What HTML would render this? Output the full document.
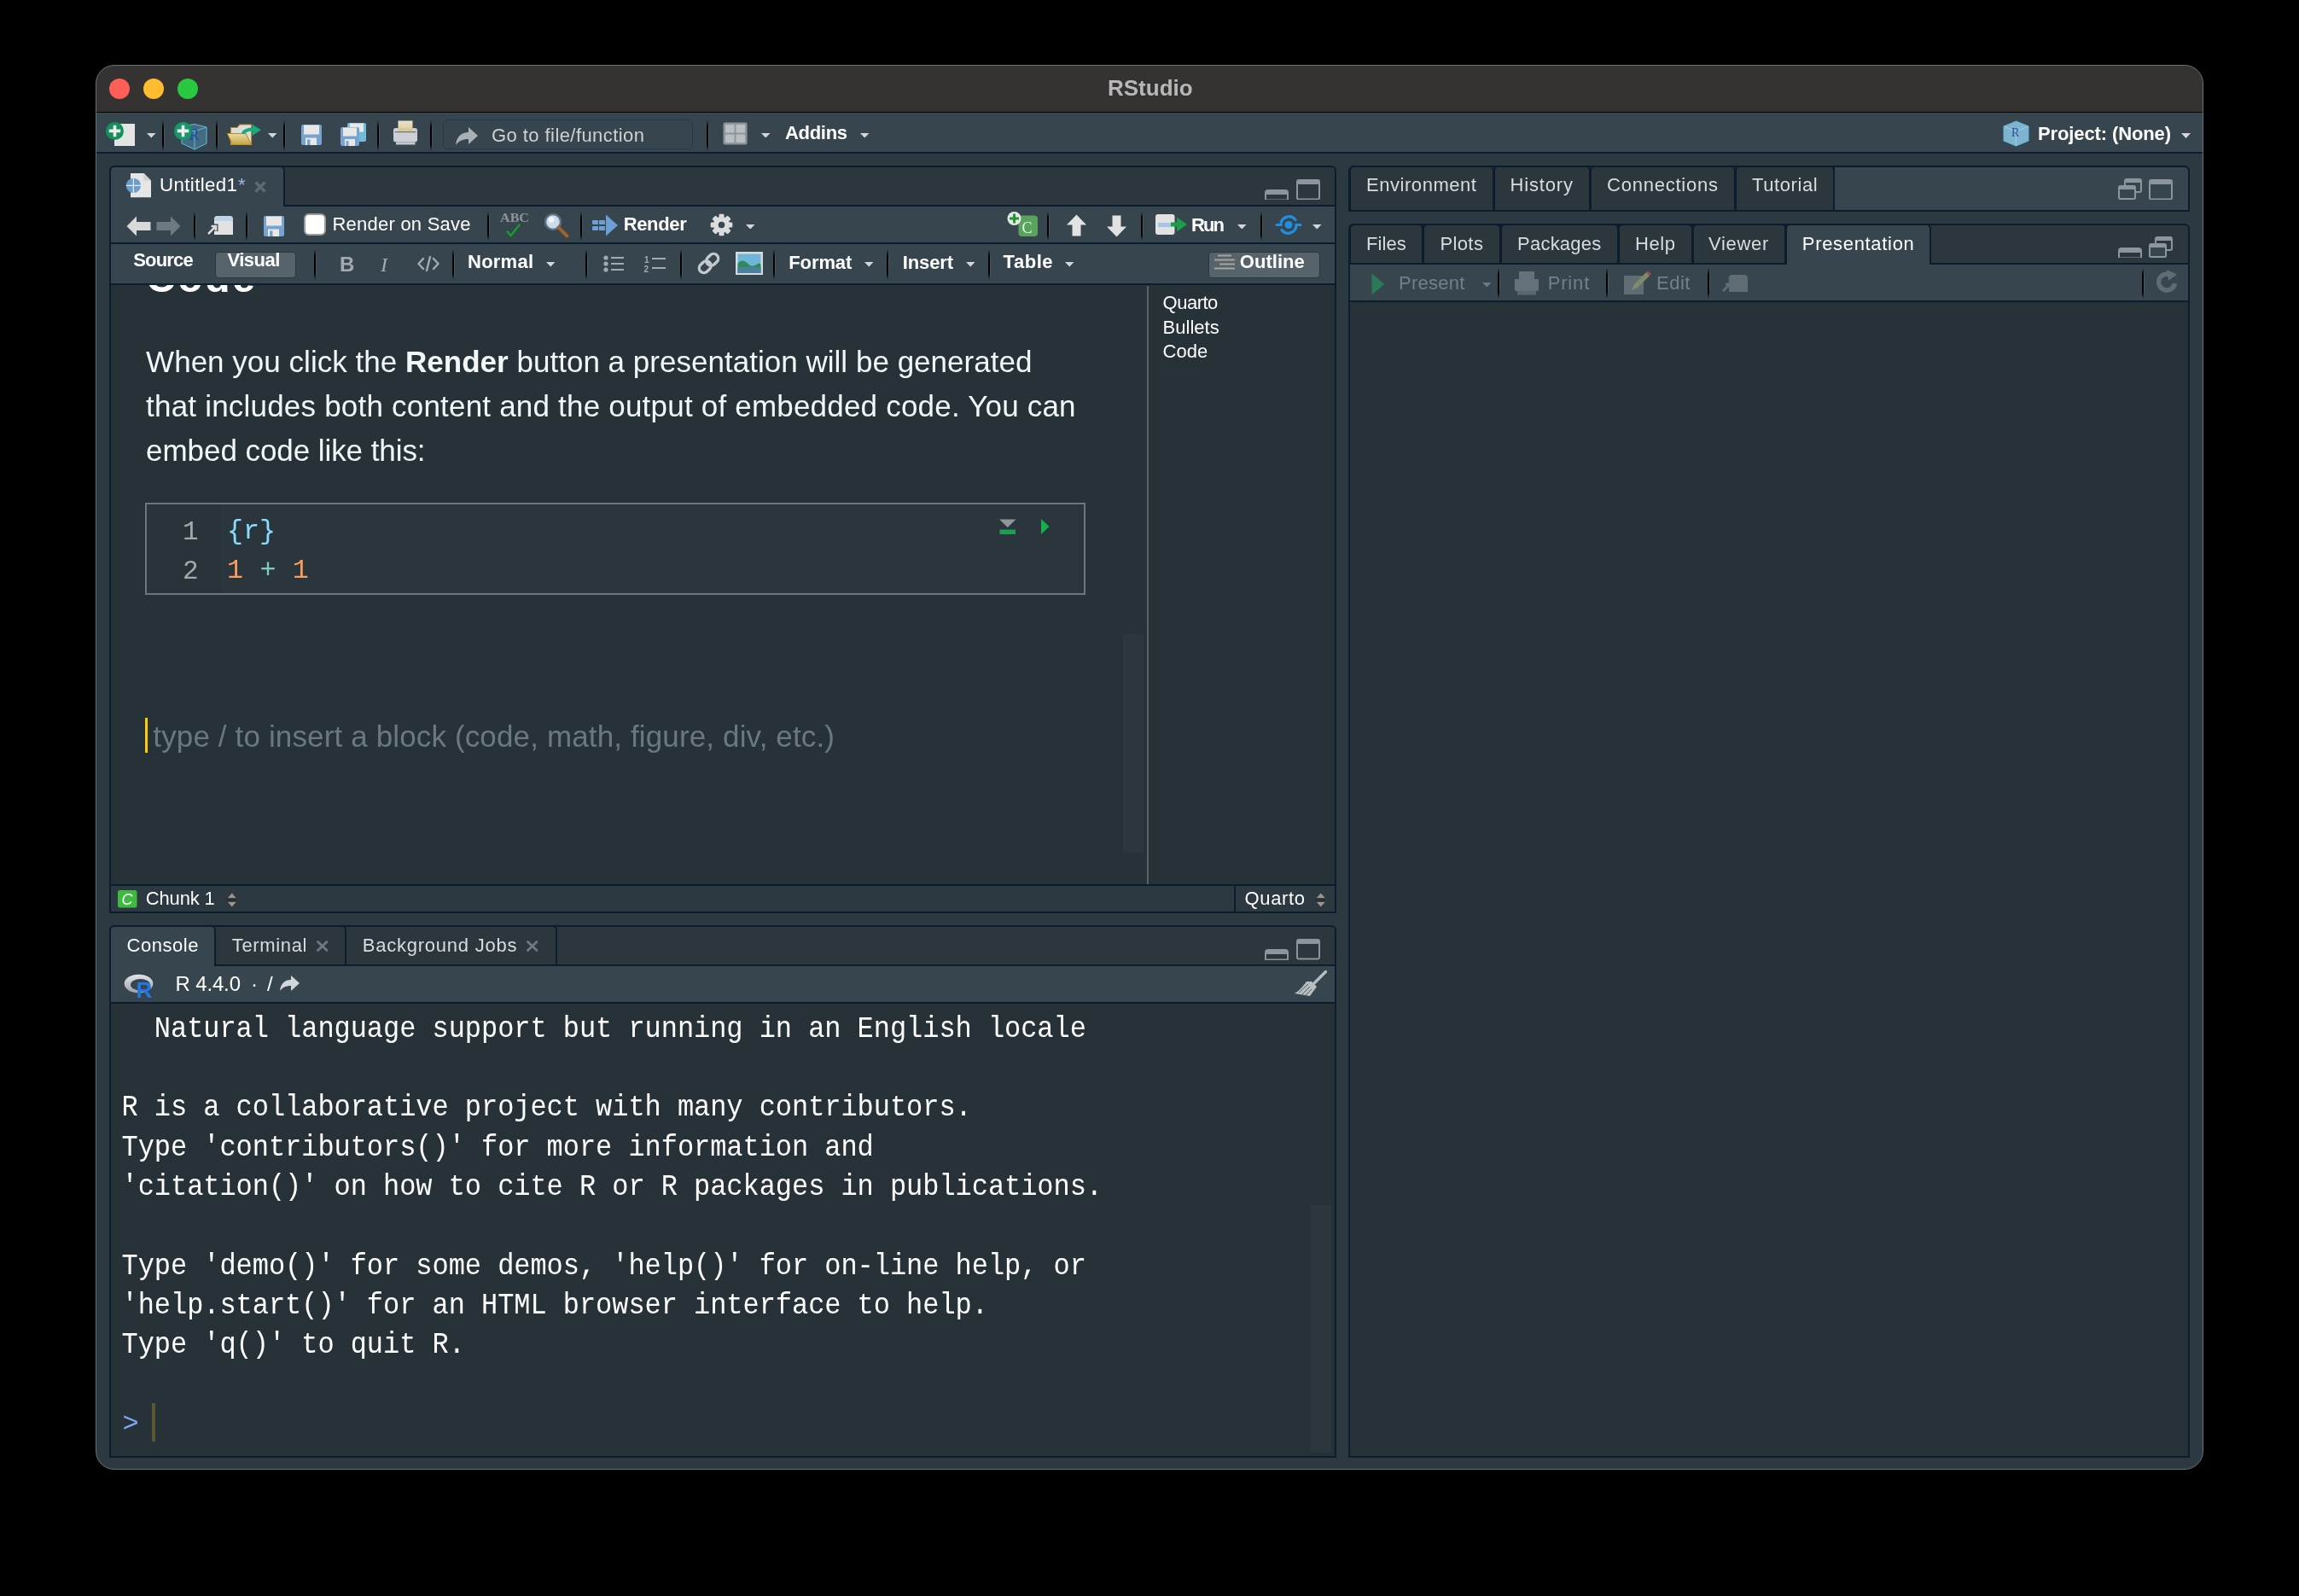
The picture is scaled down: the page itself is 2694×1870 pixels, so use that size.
<!DOCTYPE html>
<html><head><meta charset="utf-8"><style>
html,body{margin:0;padding:0;background:#000;width:2694px;height:1870px;overflow:hidden}
#root{position:relative;will-change:transform;width:2694px;height:1870px;overflow:hidden;background:#000}
</style></head><body><div id="root">
<div style="position:absolute;left:112px;top:76px;width:2470px;height:1646px;background:#2c3940;border-radius:22px;"></div>
<div style="position:absolute;left:113px;top:77px;width:2468px;height:55px;background:#343332;border-radius:21px 21px 0 0;"></div>
<div style="position:absolute;left:113px;top:131px;width:2468px;height:1.5px;background:#000;"></div>
<div style="position:absolute;left:128px;top:92px;width:24px;height:24px;background:#fe5f57;border-radius:50%;"></div>
<div style="position:absolute;left:168px;top:92px;width:24px;height:24px;background:#febc2e;border-radius:50%;"></div>
<div style="position:absolute;left:208px;top:92px;width:24px;height:24px;background:#28c840;border-radius:50%;"></div>
<div style="position:absolute;left:1298.0px;top:89.9px;font:bold 26px 'Liberation Sans',sans-serif;line-height:1;white-space:pre;color:#b8b8b8;letter-spacing:0.000px;z-index:2;">RStudio</div>
<div style="position:absolute;left:113px;top:132px;width:2468px;height:46px;background:#37464e;"></div>
<div style="position:absolute;left:113px;top:178px;width:2468px;height:2px;background:#0c1d2e;"></div>
<div style="position:absolute;left:128px;top:194px;width:1438px;height:876px;background:#2c373d;border:2px solid #0c1d2e;border-radius:6px 6px 0 0;box-sizing:border-box;"></div>
<div style="position:absolute;left:128px;top:194px;width:206px;height:50px;background:#37464e;border:2px solid #0c1d2e;border-bottom:none;border-radius:6px 6px 0 0;box-sizing:border-box;"></div>
<div style="position:absolute;left:130px;top:242px;width:1434px;height:90px;background:#37464e;"></div>
<div style="position:absolute;left:334px;top:240px;width:1230px;height:2px;background:#0c1d2e;"></div>
<div style="position:absolute;left:130px;top:284px;width:1434px;height:2px;background:#0c1d2e;"></div>
<div style="position:absolute;left:130px;top:332px;width:1434px;height:2px;background:#0c1d2e;"></div>
<div style="position:absolute;left:130px;top:334px;width:1434px;height:702px;background:#263238;"></div>
<div style="position:absolute;left:130px;top:1036px;width:1434px;height:2px;background:#0c1d2e;"></div>
<div style="position:absolute;left:130px;top:1038px;width:1434px;height:30px;background:#2c3940;"></div>
<div style="position:absolute;left:128px;top:1084px;width:1438px;height:624px;background:#2c373d;border:2px solid #0c1d2e;border-radius:6px 6px 0 0;box-sizing:border-box;"></div>
<div style="position:absolute;left:128px;top:1084px;width:125px;height:50px;background:#37464e;border:2px solid #0c1d2e;border-bottom:none;border-radius:6px 6px 0 0;box-sizing:border-box;"></div>
<div style="position:absolute;left:253px;top:1084px;width:153px;height:48px;border:2px solid #0c1d2e;border-bottom:none;border-left:none;border-radius:0 6px 0 0;box-sizing:border-box;"></div>
<div style="position:absolute;left:406px;top:1084px;width:247px;height:48px;border:2px solid #0c1d2e;border-bottom:none;border-left:none;border-radius:0 6px 0 0;box-sizing:border-box;"></div>
<div style="position:absolute;left:253px;top:1130px;width:1311px;height:2px;background:#0c1d2e;"></div>
<div style="position:absolute;left:130px;top:1132px;width:1434px;height:42px;background:#37464e;"></div>
<div style="position:absolute;left:130px;top:1174px;width:1434px;height:2px;background:#0c1d2e;"></div>
<div style="position:absolute;left:130px;top:1176px;width:1434px;height:530px;background:#263238;"></div>
<div style="position:absolute;left:1580px;top:194px;width:986px;height:54px;background:#37464e;border:2px solid #0c1d2e;border-radius:6px 6px 0 0;box-sizing:border-box;"></div>
<div style="position:absolute;left:1580px;top:262px;width:986px;height:1446px;background:#2c373d;border:2px solid #0c1d2e;border-radius:6px 6px 0 0;box-sizing:border-box;"></div>
<div style="position:absolute;left:1582px;top:308px;width:982px;height:2px;background:#0c1d2e;"></div>
<div style="position:absolute;left:1582px;top:310px;width:982px;height:42px;background:#37464e;"></div>
<div style="position:absolute;left:1582px;top:352px;width:982px;height:2px;background:#0c1d2e;"></div>
<div style="position:absolute;left:1582px;top:354px;width:982px;height:1352px;background:#263238;"></div>
<div style="position:absolute;left:576.0px;top:147.5px;font:normal 22px 'Liberation Sans',sans-serif;line-height:1;white-space:pre;color:#d0d0d0;letter-spacing:0.432px;z-index:2;">Go to file/function</div>
<div style="position:absolute;left:920.0px;top:145.3px;font:bold 22px 'Liberation Sans',sans-serif;line-height:1;white-space:pre;color:#ffffff;letter-spacing:-0.312px;z-index:2;">Addins</div>
<div style="position:absolute;left:2388.0px;top:145.7px;font:bold 22px 'Liberation Sans',sans-serif;line-height:1;white-space:pre;color:#ffffff;letter-spacing:-0.121px;z-index:2;">Project: (None)</div>
<div style="position:absolute;left:187.0px;top:206.3px;font:normal 22.3px 'Liberation Sans',sans-serif;line-height:1;white-space:pre;color:#ffffff;letter-spacing:0.373px;z-index:2;">Untitled1</div>
<div style="position:absolute;left:279.0px;top:206.3px;font:normal 22.3px 'Liberation Sans',sans-serif;line-height:1;white-space:pre;color:#9fb4e0;letter-spacing:0.000px;z-index:2;">*</div>
<div style="position:absolute;left:389.5px;top:252.3px;font:normal 22px 'Liberation Sans',sans-serif;line-height:1;white-space:pre;color:#ffffff;letter-spacing:0.231px;z-index:2;">Render on Save</div>
<div style="position:absolute;left:730.7px;top:252.3px;font:bold 22px 'Liberation Sans',sans-serif;line-height:1;white-space:pre;color:#ffffff;letter-spacing:-0.359px;z-index:2;">Render</div>
<div style="position:absolute;left:1396.0px;top:252.5px;font:bold 22px 'Liberation Sans',sans-serif;line-height:1;white-space:pre;color:#ffffff;letter-spacing:-1.883px;z-index:2;">Run</div>
<div style="position:absolute;left:156.2px;top:294.3px;font:bold 22px 'Liberation Sans',sans-serif;line-height:1;white-space:pre;color:#ffffff;letter-spacing:-0.799px;z-index:2;">Source</div>
<div style="position:absolute;left:266.4px;top:294.3px;font:bold 22px 'Liberation Sans',sans-serif;line-height:1;white-space:pre;color:#ffffff;letter-spacing:-0.484px;z-index:2;">Visual</div>
<div style="position:absolute;left:548.0px;top:296.1px;font:bold 22px 'Liberation Sans',sans-serif;line-height:1;white-space:pre;color:#ffffff;letter-spacing:0.241px;z-index:2;">Normal</div>
<div style="position:absolute;left:924.3px;top:296.6px;font:bold 22px 'Liberation Sans',sans-serif;line-height:1;white-space:pre;color:#ffffff;letter-spacing:-0.113px;z-index:2;">Format</div>
<div style="position:absolute;left:1057.7px;top:296.6px;font:bold 22px 'Liberation Sans',sans-serif;line-height:1;white-space:pre;color:#ffffff;letter-spacing:-0.084px;z-index:2;">Insert</div>
<div style="position:absolute;left:1175.6px;top:296.1px;font:bold 22px 'Liberation Sans',sans-serif;line-height:1;white-space:pre;color:#ffffff;letter-spacing:0.543px;z-index:2;">Table</div>
<div style="position:absolute;left:1452.8px;top:295.7px;font:bold 22px 'Liberation Sans',sans-serif;line-height:1;white-space:pre;color:#ffffff;letter-spacing:0.036px;z-index:2;">Outline</div>
<div style="position:absolute;left:1601.0px;top:206.3px;font:normal 22px 'Liberation Sans',sans-serif;line-height:1;white-space:pre;color:#d8dcde;letter-spacing:0.548px;z-index:2;">Environment</div>
<div style="position:absolute;left:1769.5px;top:206.3px;font:normal 22px 'Liberation Sans',sans-serif;line-height:1;white-space:pre;color:#d8dcde;letter-spacing:0.841px;z-index:2;">History</div>
<div style="position:absolute;left:1883.0px;top:206.3px;font:normal 22px 'Liberation Sans',sans-serif;line-height:1;white-space:pre;color:#d8dcde;letter-spacing:0.769px;z-index:2;">Connections</div>
<div style="position:absolute;left:2053.0px;top:206.3px;font:normal 22px 'Liberation Sans',sans-serif;line-height:1;white-space:pre;color:#d8dcde;letter-spacing:0.593px;z-index:2;">Tutorial</div>
<div style="position:absolute;left:1601.0px;top:274.9px;font:normal 22px 'Liberation Sans',sans-serif;line-height:1;white-space:pre;color:#d8dcde;letter-spacing:0.087px;z-index:2;">Files</div>
<div style="position:absolute;left:1687.4px;top:274.9px;font:normal 22px 'Liberation Sans',sans-serif;line-height:1;white-space:pre;color:#d8dcde;letter-spacing:0.395px;z-index:2;">Plots</div>
<div style="position:absolute;left:1778.0px;top:274.9px;font:normal 22px 'Liberation Sans',sans-serif;line-height:1;white-space:pre;color:#d8dcde;letter-spacing:0.239px;z-index:2;">Packages</div>
<div style="position:absolute;left:1916.0px;top:274.9px;font:normal 22px 'Liberation Sans',sans-serif;line-height:1;white-space:pre;color:#d8dcde;letter-spacing:0.583px;z-index:2;">Help</div>
<div style="position:absolute;left:2002.0px;top:274.9px;font:normal 22px 'Liberation Sans',sans-serif;line-height:1;white-space:pre;color:#d8dcde;letter-spacing:0.688px;z-index:2;">Viewer</div>
<div style="position:absolute;left:2111.8px;top:274.9px;font:normal 22px 'Liberation Sans',sans-serif;line-height:1;white-space:pre;color:#ffffff;letter-spacing:0.679px;z-index:2;">Presentation</div>
<div style="position:absolute;left:1639.0px;top:320.6px;font:normal 22px 'Liberation Sans',sans-serif;line-height:1;white-space:pre;color:#718089;letter-spacing:0.262px;z-index:2;">Present</div>
<div style="position:absolute;left:1813.7px;top:320.6px;font:normal 22px 'Liberation Sans',sans-serif;line-height:1;white-space:pre;color:#718089;letter-spacing:0.838px;z-index:2;">Print</div>
<div style="position:absolute;left:1941.0px;top:320.6px;font:normal 22px 'Liberation Sans',sans-serif;line-height:1;white-space:pre;color:#718089;letter-spacing:0.493px;z-index:2;">Edit</div>
<div style="position:absolute;left:170.8px;top:1042.1px;font:normal 22px 'Liberation Sans',sans-serif;line-height:1;white-space:pre;color:#ffffff;letter-spacing:-0.159px;z-index:2;">Chunk 1</div>
<div style="position:absolute;left:1458.6px;top:1042.3px;font:normal 22px 'Liberation Sans',sans-serif;line-height:1;white-space:pre;color:#ffffff;letter-spacing:0.627px;z-index:2;">Quarto</div>
<div style="position:absolute;left:148.5px;top:1096.8px;font:normal 22px 'Liberation Sans',sans-serif;line-height:1;white-space:pre;color:#ffffff;letter-spacing:0.547px;z-index:2;">Console</div>
<div style="position:absolute;left:271.8px;top:1096.8px;font:normal 22px 'Liberation Sans',sans-serif;line-height:1;white-space:pre;color:#d8dcde;letter-spacing:0.651px;z-index:2;">Terminal</div>
<div style="position:absolute;left:424.8px;top:1096.8px;font:normal 22px 'Liberation Sans',sans-serif;line-height:1;white-space:pre;color:#d8dcde;letter-spacing:0.764px;z-index:2;">Background Jobs</div>
<div style="position:absolute;left:205.5px;top:1140.8px;font:normal 24px 'Liberation Sans',sans-serif;line-height:1;white-space:pre;color:#ffffff;letter-spacing:-0.148px;z-index:2;">R 4.4.0</div>
<div style="position:absolute;left:294.0px;top:1140.8px;font:normal 24px 'Liberation Sans',sans-serif;line-height:1;white-space:pre;color:#ffffff;letter-spacing:0.000px;z-index:2;">·</div>
<div style="position:absolute;left:313.0px;top:1140.8px;font:normal 24px 'Liberation Sans',sans-serif;line-height:1;white-space:pre;color:#ffffff;letter-spacing:0.000px;z-index:2;">/</div>
<div style="position:absolute;left:130px;top:334px;width:600px;height:20px;overflow:hidden">
<div style="position:absolute;left:41.0px;top:-31.8px;font:bold 48px 'Liberation Sans',sans-serif;line-height:1;white-space:pre;color:#ffffff;letter-spacing:2.667px;z-index:2;">Code</div>
</div>
<div style="position:absolute;left:171.1px;top:406.2px;font:normal 35px 'Liberation Sans',sans-serif;line-height:1;white-space:pre;color:#f2f8f8;letter-spacing:0.021px;z-index:2;">When you click the <b>Render</b> button a presentation will be generated</div>
<div style="position:absolute;left:171.1px;top:457.9px;font:normal 35px 'Liberation Sans',sans-serif;line-height:1;white-space:pre;color:#f2f8f8;letter-spacing:0.202px;z-index:2;">that includes both content and the output of embedded code. You can</div>
<div style="position:absolute;left:171.1px;top:509.5px;font:normal 35px 'Liberation Sans',sans-serif;line-height:1;white-space:pre;color:#f2f8f8;letter-spacing:-0.065px;z-index:2;">embed code like this:</div>
<div style="position:absolute;left:179.3px;top:844.9px;font:normal 35px 'Liberation Sans',sans-serif;line-height:1;white-space:pre;color:#6b787e;letter-spacing:0.138px;z-index:2;">type / to insert a block (code, math, figure, div, etc.)</div>
<div style="position:absolute;left:1362.6px;top:343.5px;font:normal 22px 'Liberation Sans',sans-serif;line-height:1;white-space:pre;color:#ffffff;letter-spacing:-0.513px;z-index:2;">Quarto</div>
<div style="position:absolute;left:1362.6px;top:372.5px;font:normal 22px 'Liberation Sans',sans-serif;line-height:1;white-space:pre;color:#ffffff;letter-spacing:0.000px;z-index:2;">Bullets</div>
<div style="position:absolute;left:1362.6px;top:401.3px;font:normal 22px 'Liberation Sans',sans-serif;line-height:1;white-space:pre;color:#ffffff;letter-spacing:0.000px;z-index:2;">Code</div>
<div style="position:absolute;left:170px;top:589px;width:1102px;height:108px;background:#2b363c;border:2px solid #6c777c;box-sizing:border-box;"></div>
<div style="position:absolute;left:172px;top:591px;width:86px;height:104px;background:#29333a;"></div>
<div style="position:absolute;left:214.0px;top:607.9px;font:normal 31px 'Liberation Mono',monospace;line-height:1;white-space:pre;color:#a6a9ab;letter-spacing:0.000px;z-index:2;">1</div>
<div style="position:absolute;left:214.0px;top:653.6px;font:normal 31px 'Liberation Mono',monospace;line-height:1;white-space:pre;color:#a6a9ab;letter-spacing:0.000px;z-index:2;">2</div>
<div style="position:absolute;left:266.0px;top:607.9px;font:normal 31.7px 'Liberation Mono',monospace;line-height:1;white-space:pre;color:#89ddff;letter-spacing:0.000px;z-index:2;">{r}</div>
<div style="position:absolute;left:266.0px;top:653.5px;font:normal 31.7px 'Liberation Mono',monospace;line-height:1;white-space:pre;color:#f89d5e;letter-spacing:0.000px;z-index:2;">1</div>
<div style="position:absolute;left:304.4px;top:653.5px;font:normal 31.7px 'Liberation Mono',monospace;line-height:1;white-space:pre;color:#80cbc4;letter-spacing:0.000px;z-index:2;">+</div>
<div style="position:absolute;left:342.8px;top:653.5px;font:normal 31.7px 'Liberation Mono',monospace;line-height:1;white-space:pre;color:#f89d5e;letter-spacing:0.000px;z-index:2;">1</div>
<div style="position:absolute;left:142.5px;top:1190.5px;font:normal 32px 'Liberation Mono',monospace;line-height:1;white-space:pre;color:#ffffff;letter-spacing:0.000px;z-index:2;transform:scaleY(1.08);transform-origin:0 24.3px;letter-spacing:-0.045px;">  Natural language support but running in an English locale</div>
<div style="position:absolute;left:142.5px;top:1283.2px;font:normal 32px 'Liberation Mono',monospace;line-height:1;white-space:pre;color:#ffffff;letter-spacing:0.000px;z-index:2;transform:scaleY(1.08);transform-origin:0 24.3px;letter-spacing:-0.045px;">R is a collaborative project with many contributors.</div>
<div style="position:absolute;left:142.5px;top:1329.5px;font:normal 32px 'Liberation Mono',monospace;line-height:1;white-space:pre;color:#ffffff;letter-spacing:0.000px;z-index:2;transform:scaleY(1.08);transform-origin:0 24.3px;letter-spacing:-0.045px;">Type &#x27;contributors()&#x27; for more information and</div>
<div style="position:absolute;left:142.5px;top:1375.9px;font:normal 32px 'Liberation Mono',monospace;line-height:1;white-space:pre;color:#ffffff;letter-spacing:0.000px;z-index:2;transform:scaleY(1.08);transform-origin:0 24.3px;letter-spacing:-0.045px;">&#x27;citation()&#x27; on how to cite R or R packages in publications.</div>
<div style="position:absolute;left:142.5px;top:1468.6px;font:normal 32px 'Liberation Mono',monospace;line-height:1;white-space:pre;color:#ffffff;letter-spacing:0.000px;z-index:2;transform:scaleY(1.08);transform-origin:0 24.3px;letter-spacing:-0.045px;">Type &#x27;demo()&#x27; for some demos, &#x27;help()&#x27; for on-line help, or</div>
<div style="position:absolute;left:142.5px;top:1514.9px;font:normal 32px 'Liberation Mono',monospace;line-height:1;white-space:pre;color:#ffffff;letter-spacing:0.000px;z-index:2;transform:scaleY(1.08);transform-origin:0 24.3px;letter-spacing:-0.045px;">&#x27;help.start()&#x27; for an HTML browser interface to help.</div>
<div style="position:absolute;left:142.5px;top:1561.3px;font:normal 32px 'Liberation Mono',monospace;line-height:1;white-space:pre;color:#ffffff;letter-spacing:0.000px;z-index:2;transform:scaleY(1.08);transform-origin:0 24.3px;letter-spacing:-0.045px;">Type &#x27;q()&#x27; to quit R.</div>
<div style="position:absolute;left:143.5px;top:1653.2px;font:normal 32px 'Liberation Mono',monospace;line-height:1;white-space:pre;color:#7fa7ee;letter-spacing:0.000px;z-index:2;">&gt;</div>
<div style="position:absolute;left:134px;top:145px;width:24px;height:26px;background:#e4e4e4;"></div>
<svg style="position:absolute;left:123.5px;top:142.5px;" width="21.0" height="21.0" viewBox="0 0 21.0 21.0"><circle cx="10.5" cy="10.5" r="10.5" fill="#12905a"/><path d="M8.7 3.675h3.6v4.935h4.935v3.6h-4.935v4.935h-3.6v-4.935h-4.935v-3.6h4.935z" fill="#eee"/></svg>
<svg style="position:absolute;left:172px;top:156px;" width="10.5" height="5.5" viewBox="0 0 10.5 5.5"><path d="M0 0H10.5L5.25 5.5Z" fill="#d6d6d6"/></svg>
<div style="position:absolute;left:190px;top:141px;width:2px;height:36px;background:linear-gradient(to bottom,rgba(0,0,0,0),#000 22%,#000 78%,rgba(0,0,0,0));"></div>
<div style="position:absolute;left:192px;top:143px;width:1px;height:32px;background:linear-gradient(to bottom,rgba(255,255,255,0),rgba(255,255,255,0.09) 30%,rgba(255,255,255,0.09) 70%,rgba(255,255,255,0));"></div>
<svg style="position:absolute;left:212px;top:144px;" width="31" height="32" viewBox="0 0 31 32"><path d="M1 4L16 1.5 30 5V24L16 31 1 24z" fill="#4d84a3" fill-opacity="0.6"/><path d="M1 4L16 10 30 5M16 10V31" stroke="#5cc0dc" stroke-width="0.9" fill="none"/><path d="M1 4L16 1.5 30 5V24L16 31 1 24z" fill="none" stroke="#5cc0dc" stroke-width="1"/><text x="9.5" y="20" font-family="Liberation Serif" font-size="18" fill="#1f4fa8">R</text></svg>
<svg style="position:absolute;left:203.5px;top:142.5px;" width="21.0" height="21.0" viewBox="0 0 21.0 21.0"><circle cx="10.5" cy="10.5" r="10.5" fill="#16976a"/><path d="M8.7 3.675h3.6v4.935h4.935v3.6h-4.935v4.935h-3.6v-4.935h-4.935v-3.6h4.935z" fill="#eee"/></svg>
<div style="position:absolute;left:252.5px;top:141px;width:2.0px;height:36px;background:linear-gradient(to bottom,rgba(0,0,0,0),#000 22%,#000 78%,rgba(0,0,0,0));"></div>
<div style="position:absolute;left:254.5px;top:143px;width:1.0px;height:32px;background:linear-gradient(to bottom,rgba(255,255,255,0),rgba(255,255,255,0.09) 30%,rgba(255,255,255,0.09) 70%,rgba(255,255,255,0));"></div>
<svg style="position:absolute;left:265px;top:143px;" width="42" height="29" viewBox="0 0 42 29"><defs><linearGradient id="fg" x1="0" y1="0" x2="0" y2="1"><stop offset="0" stop-color="#e6dea8"/><stop offset="1" stop-color="#c9a445"/></linearGradient></defs><path d="M5.5 26.5V6.5h7.5l3-3.5h13.5v23.5z" fill="#dcdddc" stroke="#b8901e" stroke-width="1.1"/><path d="M1.5 13.5h21.5l6.5 13H7.5z" fill="url(#fg)" stroke="#b8901e" stroke-width="1.1"/><path d="M19.5 13.5c2.5-4 7-5 12-5" stroke="#1ba87e" stroke-width="4" fill="none"/><path d="M30.5 2.8L41 9.2 30.5 16z" fill="#1ba87e"/></svg>
<svg style="position:absolute;left:314px;top:156px;" width="10.5" height="5.5" viewBox="0 0 10.5 5.5"><path d="M0 0H10.5L5.25 5.5Z" fill="#d6d6d6"/></svg>
<div style="position:absolute;left:332px;top:141px;width:2px;height:36px;background:linear-gradient(to bottom,rgba(0,0,0,0),#000 22%,#000 78%,rgba(0,0,0,0));"></div>
<div style="position:absolute;left:334px;top:143px;width:1px;height:32px;background:linear-gradient(to bottom,rgba(255,255,255,0),rgba(255,255,255,0.09) 30%,rgba(255,255,255,0.09) 70%,rgba(255,255,255,0));"></div>
<svg style="position:absolute;left:353px;top:146px;" width="24" height="24" viewBox="0 0 24 24"><rect x="0" y="0" width="24" height="24" rx="2" fill="#76a3cf"/><rect x="3" y="0.5" width="18" height="11" fill="#e8e8e8"/><rect x="5" y="15.5" width="13" height="8.5" fill="#e8e8e8"/><rect x="7" y="17.5" width="3.5" height="6.5" fill="#76a3cf"/></svg>
<svg style="position:absolute;left:399px;top:144px;" width="30" height="27" viewBox="0 0 30 27"><rect x="8" y="0" width="22" height="22" rx="2" fill="#72bcd6"/><rect x="11" y="0.5" width="16" height="10" fill="#e8e8e8"/><rect x="19" y="14" width="3" height="8" fill="#e8e8e8"/><rect x="0" y="5" width="22" height="22" rx="2" fill="#76a3cf"/><rect x="3" y="5.5" width="16" height="10" fill="#e8e8e8"/><rect x="5" y="19" width="12" height="8" fill="#e8e8e8"/><rect x="6.5" y="21" width="3" height="6" fill="#76a3cf"/></svg>
<div style="position:absolute;left:442px;top:141px;width:2px;height:36px;background:linear-gradient(to bottom,rgba(0,0,0,0),#000 22%,#000 78%,rgba(0,0,0,0));"></div>
<div style="position:absolute;left:444px;top:143px;width:1px;height:32px;background:linear-gradient(to bottom,rgba(255,255,255,0),rgba(255,255,255,0.09) 30%,rgba(255,255,255,0.09) 70%,rgba(255,255,255,0));"></div>
<svg style="position:absolute;left:460px;top:141px;" width="32" height="29" viewBox="0 0 32 29"><defs><linearGradient id="pp" x1="0" y1="0" x2="0" y2="1"><stop offset="0" stop-color="#ebe3c6"/><stop offset="1" stop-color="#d6c89a"/></linearGradient></defs><rect x="6.5" y="0.5" width="17" height="14" fill="url(#pp)"/><path d="M1 11.5c0-1.5 1-2.5 2.5-2.5h23c1.5 0 2.5 1 2.5 2.5V23c0 1.3-1 2.3-2.3 2.3H3.3C2 25.3 1 24.3 1 23z" fill="#ccd0d6"/><rect x="6.5" y="9" width="17" height="4" fill="#d6c89a"/><rect x="2.5" y="13" width="25" height="1.2" fill="#6d747c"/><rect x="4" y="25.3" width="22.5" height="3.2" fill="#c3c8ce"/></svg>
<div style="position:absolute;left:503.5px;top:141px;width:2.0px;height:36px;background:linear-gradient(to bottom,rgba(0,0,0,0),#000 22%,#000 78%,rgba(0,0,0,0));"></div>
<div style="position:absolute;left:505.5px;top:143px;width:1.0px;height:32px;background:linear-gradient(to bottom,rgba(255,255,255,0),rgba(255,255,255,0.09) 30%,rgba(255,255,255,0.09) 70%,rgba(255,255,255,0));"></div>
<div style="position:absolute;left:518.5px;top:139.5px;width:293.0px;height:35.0px;border:1.5px solid #24394c;border-radius:5px;box-sizing:border-box;"></div>
<svg style="position:absolute;left:533px;top:145px;" width="28" height="26" viewBox="0 0 28 26"><path d="M1 25c1-10 7-15 15-15V4l11 10-11 10v-6c-7 0-11 2-15 7z" fill="#a8b0b6"/></svg>
<div style="position:absolute;left:828px;top:141px;width:2px;height:36px;background:linear-gradient(to bottom,rgba(0,0,0,0),#000 22%,#000 78%,rgba(0,0,0,0));"></div>
<div style="position:absolute;left:830px;top:143px;width:1px;height:32px;background:linear-gradient(to bottom,rgba(255,255,255,0),rgba(255,255,255,0.09) 30%,rgba(255,255,255,0.09) 70%,rgba(255,255,255,0));"></div>
<svg style="position:absolute;left:847px;top:143px;" width="29" height="27" viewBox="0 0 29 27"><rect x="0.5" y="0.5" width="28" height="26" rx="2" fill="#8e969b"/><rect x="3" y="3" width="10.5" height="9.5" rx="1" fill="#b9bfc3"/><rect x="15.5" y="3" width="10.5" height="9.5" rx="1" fill="#b9bfc3"/><rect x="3" y="14.5" width="10.5" height="9.5" rx="1" fill="#b9bfc3"/><rect x="15.5" y="14.5" width="10.5" height="9.5" rx="1" fill="#b9bfc3"/></svg>
<svg style="position:absolute;left:892px;top:155.5px;" width="10.5" height="5.5" viewBox="0 0 10.5 5.5"><path d="M0 0H10.5L5.25 5.5Z" fill="#d6d6d6"/></svg>
<svg style="position:absolute;left:1008px;top:155.5px;" width="10.5" height="5.5" viewBox="0 0 10.5 5.5"><path d="M0 0H10.5L5.25 5.5Z" fill="#d6d6d6"/></svg>
<svg style="position:absolute;left:2347px;top:141px;" width="31" height="31" viewBox="0 0 31 31"><path d="M15.5 1L30 7v17L15.5 30 1 24V7z" fill="#7fb4cf" stroke="#5fb8d8" stroke-width="1"/><path d="M1 7l14.5 6L30 7M15.5 13v17" stroke="#9fd3ea" stroke-width="0.8" fill="none"/><text x="10" y="19" font-family="Liberation Serif" font-size="14" fill="#2a4f9a">R</text></svg>
<svg style="position:absolute;left:2556px;top:155.5px;" width="11" height="6" viewBox="0 0 11 6"><path d="M0 0H11L5.5 6Z" fill="#d6d6d6"/></svg>
<svg style="position:absolute;left:147px;top:202px;" width="31" height="30" viewBox="0 0 31 30"><path d="M6 1h15.5l8.5 8.5V29.3H6z" fill="#e6e6e6"/><path d="M21.5 1v8.5h8.5z" fill="#cfcfcf"/><circle cx="9.4" cy="15.4" r="8.6" fill="#6a9ccc"/><path d="M0.8 15.4h17.2M9.4 6.8v17.2" stroke="#e6e6e6" stroke-width="1.3"/></svg>
<svg style="position:absolute;left:298px;top:212px;" width="14" height="14" viewBox="0 0 14 14"><path d="M1.5 1.5l11 11M12.5 1.5l-11 11" stroke="#5f6a71" stroke-width="3.4"/></svg>
<svg style="position:absolute;left:1482px;top:221.8px;" width="28" height="12.5" viewBox="0 0 28 12.5"><path d="M1 12.5V4a3 3 0 0 1 3-3h20a3 3 0 0 1 3 3v8.5z" fill="none" stroke="#8b959b" stroke-width="2"/><rect x="1" y="1" width="26" height="5" rx="2" fill="#8b959b"/></svg>
<svg style="position:absolute;left:1518.5px;top:209.8px;" width="28" height="24.5" viewBox="0 0 28 24.5"><rect x="1" y="1" width="26" height="22.5" rx="2" fill="none" stroke="#8b959b" stroke-width="2"/><rect x="1" y="1" width="26" height="5" rx="2" fill="#8b959b"/></svg>
<svg style="position:absolute;left:1482px;top:1112px;" width="28" height="12.5" viewBox="0 0 28 12.5"><path d="M1 12.5V4a3 3 0 0 1 3-3h20a3 3 0 0 1 3 3v8.5z" fill="none" stroke="#8b959b" stroke-width="2"/><rect x="1" y="1" width="26" height="5" rx="2" fill="#8b959b"/></svg>
<svg style="position:absolute;left:1518.5px;top:1100px;" width="28" height="24.5" viewBox="0 0 28 24.5"><rect x="1" y="1" width="26" height="22.5" rx="2" fill="none" stroke="#8b959b" stroke-width="2"/><rect x="1" y="1" width="26" height="5" rx="2" fill="#8b959b"/></svg>
<svg style="position:absolute;left:2482px;top:209.3px;" width="28" height="25" viewBox="0 0 28 25"><rect x="8" y="1" width="19" height="15" rx="2" fill="none" stroke="#8b959b" stroke-width="2"/><rect x="8" y="1" width="19" height="4" rx="1.5" fill="#8b959b"/><rect x="1" y="9" width="19" height="15" rx="1.5" fill="#36454e" stroke="#8b959b" stroke-width="2"/><rect x="1" y="9" width="19" height="4" rx="1.5" fill="#8b959b"/></svg>
<svg style="position:absolute;left:2518.3px;top:209.8px;" width="28" height="24.5" viewBox="0 0 28 24.5"><rect x="1" y="1" width="26" height="22.5" rx="2" fill="none" stroke="#8b959b" stroke-width="2"/><rect x="1" y="1" width="26" height="5" rx="2" fill="#8b959b"/></svg>
<svg style="position:absolute;left:2482px;top:289.7px;" width="28" height="12.5" viewBox="0 0 28 12.5"><path d="M1 12.5V4a3 3 0 0 1 3-3h20a3 3 0 0 1 3 3v8.5z" fill="none" stroke="#8b959b" stroke-width="2"/><rect x="1" y="1" width="26" height="5" rx="2" fill="#8b959b"/></svg>
<svg style="position:absolute;left:2518px;top:277.4px;" width="28" height="25" viewBox="0 0 28 25"><rect x="8" y="1" width="19" height="15" rx="2" fill="none" stroke="#8b959b" stroke-width="2"/><rect x="8" y="1" width="19" height="4" rx="1.5" fill="#8b959b"/><rect x="1" y="9" width="19" height="15" rx="1.5" fill="#36454e" stroke="#8b959b" stroke-width="2"/><rect x="1" y="9" width="19" height="4" rx="1.5" fill="#8b959b"/></svg>
<svg style="position:absolute;left:148px;top:253px;" width="29" height="24" viewBox="0 0 29 24"><path d="M0.5 12L12 0.5v6.5h16.5v10H12v6.5z" fill="#d9d9d9"/></svg>
<svg style="position:absolute;left:183px;top:253px;" width="29" height="24" viewBox="0 0 29 24"><path d="M28.5 12L17 0.5v6.5H0.5v10H17v6.5z" fill="#6f7a80"/></svg>
<div style="position:absolute;left:226.6px;top:248px;width:2.0px;height:34px;background:linear-gradient(to bottom,rgba(0,0,0,0),#000 22%,#000 78%,rgba(0,0,0,0));"></div>
<div style="position:absolute;left:228.6px;top:250px;width:1.0px;height:30px;background:linear-gradient(to bottom,rgba(255,255,255,0),rgba(255,255,255,0.09) 30%,rgba(255,255,255,0.09) 70%,rgba(255,255,255,0));"></div>
<svg style="position:absolute;left:243px;top:253px;" width="30" height="22" viewBox="0 0 30 22"><path d="M8 4a4 4 0 0 1 4-4h14a4 4 0 0 1 4 4v18H8z" fill="#e2e2e2"/><path d="M8 4a4 4 0 0 1 4-4h14a4 4 0 0 1 4 4v2H8z" fill="#bcd3e8"/><path d="M1 21l9-9M4 12h6v6" stroke="#2f3e46" stroke-width="5" fill="none"/><path d="M1 21l9-9M4.5 12h5.5v5.5" stroke="#d9d9d9" stroke-width="2.6" fill="none"/></svg>
<div style="position:absolute;left:287.8px;top:248px;width:2.0px;height:34px;background:linear-gradient(to bottom,rgba(0,0,0,0),#000 22%,#000 78%,rgba(0,0,0,0));"></div>
<div style="position:absolute;left:289.8px;top:250px;width:1.0px;height:30px;background:linear-gradient(to bottom,rgba(255,255,255,0),rgba(255,255,255,0.09) 30%,rgba(255,255,255,0.09) 70%,rgba(255,255,255,0));"></div>
<svg style="position:absolute;left:309px;top:253px;" width="24" height="24" viewBox="0 0 24 24"><rect x="0" y="0" width="24" height="24" rx="2" fill="#76a3cf"/><rect x="3" y="0.5" width="18" height="11" fill="#e8e8e8"/><rect x="5" y="15.5" width="13" height="8.5" fill="#e8e8e8"/><rect x="7" y="17.5" width="3.5" height="6.5" fill="#76a3cf"/></svg>
<div style="position:absolute;left:356px;top:250px;width:26px;height:26px;background:#ffffff;border:2px solid #9a9a9a;border-radius:6px;box-sizing:border-box;"></div>
<div style="position:absolute;left:570.8px;top:248px;width:2.0px;height:34px;background:linear-gradient(to bottom,rgba(0,0,0,0),#000 22%,#000 78%,rgba(0,0,0,0));"></div>
<div style="position:absolute;left:572.8px;top:250px;width:1.0px;height:30px;background:linear-gradient(to bottom,rgba(255,255,255,0),rgba(255,255,255,0.09) 30%,rgba(255,255,255,0.09) 70%,rgba(255,255,255,0));"></div>
<svg style="position:absolute;left:585px;top:248px;" width="37" height="30" viewBox="0 0 37 30"><text x="1" y="12" font-family="Liberation Serif" font-weight="bold" font-size="14" textLength="34" lengthAdjust="spacingAndGlyphs" fill="#8d9499">ABC</text><path d="M9 22.5l4.5 5.5L24 15" stroke="#12a02a" stroke-width="2.4" fill="none"/></svg>
<svg style="position:absolute;left:637px;top:249px;" width="30" height="30" viewBox="0 0 30 30"><circle cx="11" cy="11" r="9" fill="#c8dcea" stroke="#5d6f7c" stroke-width="2.4"/><circle cx="9" cy="8.5" r="3.5" fill="#ffffff" fill-opacity="0.7"/><path d="M17.5 17.5l10 10" stroke="#a0602a" stroke-width="4" stroke-linecap="round"/></svg>
<div style="position:absolute;left:679.9px;top:248px;width:2.0px;height:34px;background:linear-gradient(to bottom,rgba(0,0,0,0),#000 22%,#000 78%,rgba(0,0,0,0));"></div>
<div style="position:absolute;left:681.9px;top:250px;width:1.0px;height:30px;background:linear-gradient(to bottom,rgba(255,255,255,0),rgba(255,255,255,0.09) 30%,rgba(255,255,255,0.09) 70%,rgba(255,255,255,0));"></div>
<svg style="position:absolute;left:693px;top:251px;" width="32" height="26" viewBox="0 0 32 26"><path d="M17 0.5L31 13 17 25.5z" fill="#6d9fd2"/><rect x="1" y="7" width="7" height="5" rx="1" fill="#6d9fd2"/><rect x="9" y="7" width="7" height="5" fill="#6d9fd2"/><rect x="1" y="14" width="7" height="5" rx="1" fill="#6d9fd2"/><rect x="9" y="14" width="7" height="5" fill="#6d9fd2"/></svg>
<svg style="position:absolute;left:832px;top:250px;" width="27" height="27" viewBox="0 0 27 27"><g transform="translate(13.5 13.5)" fill="#dcdcdc"><circle r="9.6"/><rect x="-3" y="-12.8" width="6" height="7" rx="1.2" transform="rotate(0)"/><rect x="-3" y="-12.8" width="6" height="7" rx="1.2" transform="rotate(45)"/><rect x="-3" y="-12.8" width="6" height="7" rx="1.2" transform="rotate(90)"/><rect x="-3" y="-12.8" width="6" height="7" rx="1.2" transform="rotate(135)"/><rect x="-3" y="-12.8" width="6" height="7" rx="1.2" transform="rotate(180)"/><rect x="-3" y="-12.8" width="6" height="7" rx="1.2" transform="rotate(225)"/><rect x="-3" y="-12.8" width="6" height="7" rx="1.2" transform="rotate(270)"/><rect x="-3" y="-12.8" width="6" height="7" rx="1.2" transform="rotate(315)"/><circle r="3.8" fill="#37464e"/></g></svg>
<svg style="position:absolute;left:874px;top:262.5px;" width="10.5" height="5.5" viewBox="0 0 10.5 5.5"><path d="M0 0H10.5L5.25 5.5Z" fill="#d6d6d6"/></svg>
<svg style="position:absolute;left:1180px;top:247px;" width="37" height="31" viewBox="0 0 37 31"><rect x="13.5" y="5.5" width="22.5" height="24.5" rx="4" fill="#5aa35c"/><text x="17.5" y="26" font-family="Liberation Serif" font-size="18" fill="#e8f3e8">C</text><circle cx="8.5" cy="9" r="8" fill="#e8e8e8"/><path d="M7 3.5h3v4h4v3h-4v4H7v-4H3v-3h4z" fill="#1f9a2a"/></svg>
<div style="position:absolute;left:1227.3px;top:248px;width:2.0px;height:34px;background:linear-gradient(to bottom,rgba(0,0,0,0),#000 22%,#000 78%,rgba(0,0,0,0));"></div>
<div style="position:absolute;left:1229.3px;top:250px;width:1.0px;height:30px;background:linear-gradient(to bottom,rgba(255,255,255,0),rgba(255,255,255,0.09) 30%,rgba(255,255,255,0.09) 70%,rgba(255,255,255,0));"></div>
<svg style="position:absolute;left:1249.5px;top:251px;" width="23" height="26" viewBox="0 0 23 26"><path d="M11.5 0.5L23 12.5h-6.5v13h-10v-13H0z" fill="#e2e2e2"/></svg>
<svg style="position:absolute;left:1297px;top:252px;" width="23" height="26" viewBox="0 0 23 26"><path d="M11.5 25.5L23 13.5h-6.5v-13h-10v13H0z" fill="#e2e2e2"/></svg>
<div style="position:absolute;left:1337px;top:248px;width:2px;height:34px;background:linear-gradient(to bottom,rgba(0,0,0,0),#000 22%,#000 78%,rgba(0,0,0,0));"></div>
<div style="position:absolute;left:1339px;top:250px;width:1px;height:30px;background:linear-gradient(to bottom,rgba(255,255,255,0),rgba(255,255,255,0.09) 30%,rgba(255,255,255,0.09) 70%,rgba(255,255,255,0));"></div>
<svg style="position:absolute;left:1354px;top:251px;" width="38" height="24" viewBox="0 0 38 24"><rect x="0" y="0" width="22.5" height="24" rx="3" fill="#e2e2e2"/><rect x="3" y="10" width="16" height="5" fill="#a7c4e8"/><path d="M18 9.5h7v-6l12 8.5-12 8.5v-6h-7z" fill="#1d9c4a"/></svg>
<svg style="position:absolute;left:1450px;top:262.5px;" width="10.5" height="5.5" viewBox="0 0 10.5 5.5"><path d="M0 0H10.5L5.25 5.5Z" fill="#d6d6d6"/></svg>
<div style="position:absolute;left:1476.5px;top:248px;width:2.0px;height:34px;background:linear-gradient(to bottom,rgba(0,0,0,0),#000 22%,#000 78%,rgba(0,0,0,0));"></div>
<div style="position:absolute;left:1478.5px;top:250px;width:1.0px;height:30px;background:linear-gradient(to bottom,rgba(255,255,255,0),rgba(255,255,255,0.09) 30%,rgba(255,255,255,0.09) 70%,rgba(255,255,255,0));"></div>
<svg style="position:absolute;left:1493px;top:251px;" width="34" height="25" viewBox="0 0 34 25"><circle cx="17" cy="12.5" r="4.5" fill="#1f8fe0"/><path d="M3 12.5h5a9.5 9.5 0 0 1 17-6" stroke="#1f8fe0" stroke-width="3.2" fill="none" stroke-linecap="round"/><path d="M31 12.5h-5a9.5 9.5 0 0 1-17 6" stroke="#1f8fe0" stroke-width="3.2" fill="none" stroke-linecap="round"/></svg>
<svg style="position:absolute;left:1538px;top:263px;" width="10.5" height="5.5" viewBox="0 0 10.5 5.5"><path d="M0 0H10.5L5.25 5.5Z" fill="#d6d6d6"/></svg>
<div style="position:absolute;left:251.5px;top:294.5px;width:95.0px;height:31.0px;background:#56636b;border:1px solid #2a3740;border-radius:4px;box-sizing:border-box;"></div>
<div style="position:absolute;left:368.3px;top:292px;width:2.0px;height:36px;background:linear-gradient(to bottom,rgba(0,0,0,0),#000 22%,#000 78%,rgba(0,0,0,0));"></div>
<div style="position:absolute;left:370.3px;top:294px;width:1.0px;height:32px;background:linear-gradient(to bottom,rgba(255,255,255,0),rgba(255,255,255,0.09) 30%,rgba(255,255,255,0.09) 70%,rgba(255,255,255,0));"></div>
<svg style="position:absolute;left:398px;top:299px;" width="17" height="19" viewBox="0 0 17 19"><text x="0" y="18.5" font-family="Liberation Sans" font-weight="bold" font-size="24" fill="#a3abb0">B</text></svg>
<svg style="position:absolute;left:445px;top:299px;" width="17" height="19" viewBox="0 0 17 19"><text x="1" y="18.5" font-family="Liberation Serif" font-style="italic" font-size="24" fill="#a3abb0">I</text></svg>
<svg style="position:absolute;left:489px;top:300px;" width="26" height="18" viewBox="0 0 26 18"><path d="M7 3L1.5 9 7 15M19 3l5.5 6L19 15M15 1L11 17" stroke="#a3abb0" stroke-width="2.4" fill="none" stroke-linecap="round" stroke-linejoin="round"/></svg>
<div style="position:absolute;left:530px;top:292px;width:2px;height:36px;background:linear-gradient(to bottom,rgba(0,0,0,0),#000 22%,#000 78%,rgba(0,0,0,0));"></div>
<div style="position:absolute;left:532px;top:294px;width:1px;height:32px;background:linear-gradient(to bottom,rgba(255,255,255,0),rgba(255,255,255,0.09) 30%,rgba(255,255,255,0.09) 70%,rgba(255,255,255,0));"></div>
<svg style="position:absolute;left:640px;top:307px;" width="10.5" height="5.5" viewBox="0 0 10.5 5.5"><path d="M0 0H10.5L5.25 5.5Z" fill="#d6d6d6"/></svg>
<div style="position:absolute;left:686.2px;top:292px;width:2.0px;height:36px;background:linear-gradient(to bottom,rgba(0,0,0,0),#000 22%,#000 78%,rgba(0,0,0,0));"></div>
<div style="position:absolute;left:688.2px;top:294px;width:1.0px;height:32px;background:linear-gradient(to bottom,rgba(255,255,255,0),rgba(255,255,255,0.09) 30%,rgba(255,255,255,0.09) 70%,rgba(255,255,255,0));"></div>
<svg style="position:absolute;left:707px;top:299px;" width="25" height="20" viewBox="0 0 25 20"><circle cx="3" cy="3" r="2.6" fill="#a3abb0"/><circle cx="3" cy="10" r="2.6" fill="#a3abb0"/><circle cx="3" cy="17" r="2.6" fill="#a3abb0"/><path d="M9 3h15M9 10h15M9 17h15" stroke="#a3abb0" stroke-width="2"/></svg>
<svg style="position:absolute;left:754px;top:299px;" width="27" height="20" viewBox="0 0 27 20"><text x="1" y="9" font-family="Liberation Sans" font-weight="bold" font-size="10" fill="#a3abb0">1</text><text x="0.5" y="19.5" font-family="Liberation Sans" font-weight="bold" font-size="10" fill="#a3abb0">2</text><path d="M10 4h16M10 15h16" stroke="#a3abb0" stroke-width="2"/></svg>
<div style="position:absolute;left:796.6px;top:292px;width:2.0px;height:36px;background:linear-gradient(to bottom,rgba(0,0,0,0),#000 22%,#000 78%,rgba(0,0,0,0));"></div>
<div style="position:absolute;left:798.6px;top:294px;width:1.0px;height:32px;background:linear-gradient(to bottom,rgba(255,255,255,0),rgba(255,255,255,0.09) 30%,rgba(255,255,255,0.09) 70%,rgba(255,255,255,0));"></div>
<svg style="position:absolute;left:816px;top:295px;" width="29" height="27" viewBox="0 0 29 27"><g transform="rotate(-45 14.5 13.5)" fill="none" stroke="#c4c9cc" stroke-width="3.4"><rect x="1" y="8" width="15" height="11" rx="5.5"/><rect x="13" y="8" width="15" height="11" rx="5.5"/></g></svg>
<svg style="position:absolute;left:862px;top:294.5px;" width="32" height="27.5" viewBox="0 0 32 27.5"><rect x="0" y="0" width="32" height="27.5" fill="#d7dadb"/><rect x="2.5" y="2.5" width="27" height="22.5" fill="#6fb5d8"/><path d="M2.5 14c4-5 8-4 12 0s7 3 10 1 4-1 5 0V25H2.5z" fill="#2e8a58"/><rect x="2.5" y="18" width="27" height="7" fill="#4b7fa0"/></svg>
<div style="position:absolute;left:906.3px;top:292px;width:2.0px;height:36px;background:linear-gradient(to bottom,rgba(0,0,0,0),#000 22%,#000 78%,rgba(0,0,0,0));"></div>
<div style="position:absolute;left:908.3px;top:294px;width:1.0px;height:32px;background:linear-gradient(to bottom,rgba(255,255,255,0),rgba(255,255,255,0.09) 30%,rgba(255,255,255,0.09) 70%,rgba(255,255,255,0));"></div>
<svg style="position:absolute;left:1012.5px;top:307px;" width="10.5" height="5.5" viewBox="0 0 10.5 5.5"><path d="M0 0H10.5L5.25 5.5Z" fill="#d6d6d6"/></svg>
<div style="position:absolute;left:1039.3px;top:292px;width:2.0px;height:36px;background:linear-gradient(to bottom,rgba(0,0,0,0),#000 22%,#000 78%,rgba(0,0,0,0));"></div>
<div style="position:absolute;left:1041.3px;top:294px;width:1.0px;height:32px;background:linear-gradient(to bottom,rgba(255,255,255,0),rgba(255,255,255,0.09) 30%,rgba(255,255,255,0.09) 70%,rgba(255,255,255,0));"></div>
<svg style="position:absolute;left:1131.7px;top:307px;" width="10.5" height="5.5" viewBox="0 0 10.5 5.5"><path d="M0 0H10.5L5.25 5.5Z" fill="#d6d6d6"/></svg>
<div style="position:absolute;left:1158px;top:292px;width:2px;height:36px;background:linear-gradient(to bottom,rgba(0,0,0,0),#000 22%,#000 78%,rgba(0,0,0,0));"></div>
<div style="position:absolute;left:1160px;top:294px;width:1px;height:32px;background:linear-gradient(to bottom,rgba(255,255,255,0),rgba(255,255,255,0.09) 30%,rgba(255,255,255,0.09) 70%,rgba(255,255,255,0));"></div>
<svg style="position:absolute;left:1248px;top:307px;" width="10.5" height="5.5" viewBox="0 0 10.5 5.5"><path d="M0 0H10.5L5.25 5.5Z" fill="#d6d6d6"/></svg>
<div style="position:absolute;left:1415.5px;top:294.5px;width:131.0px;height:31.0px;background:#56636b;border:1px solid #2a3740;border-radius:4px;box-sizing:border-box;"></div>
<svg style="position:absolute;left:1423px;top:298px;" width="24" height="20" viewBox="0 0 24 20"><path d="M4 1.5h16M0 6.5h24M6 11.5h18M0 16.5h24" stroke="#a9a49c" stroke-width="2"/></svg>
<div style="position:absolute;left:1748.6px;top:196px;width:2.0px;height:51px;background:#0c1d2e;"></div>
<div style="position:absolute;left:1861.7px;top:196px;width:2.0px;height:51px;background:#0c1d2e;"></div>
<div style="position:absolute;left:2031.4px;top:196px;width:2.0px;height:51px;background:#0c1d2e;"></div>
<div style="position:absolute;left:2147.8px;top:196px;width:2.0px;height:51px;background:#0c1d2e;"></div>
<div style="position:absolute;left:1582px;top:196px;width:566.8000000000002px;height:50px;background:#2c373d;"></div>
<div style="position:absolute;left:1665.6px;top:264px;width:2.0px;height:44px;background:#0c1d2e;"></div>
<div style="position:absolute;left:1756.8px;top:264px;width:2.0px;height:44px;background:#0c1d2e;"></div>
<div style="position:absolute;left:1894.8px;top:264px;width:2.0px;height:44px;background:#0c1d2e;"></div>
<div style="position:absolute;left:1981.7px;top:264px;width:2.0px;height:44px;background:#0c1d2e;"></div>
<div style="position:absolute;left:2091px;top:264px;width:2px;height:44px;background:#0c1d2e;"></div>
<div style="position:absolute;left:1581px;top:194px;width:170px;height:53px;border:2px solid #0c1d2e;border-bottom:none;border-radius:6px 6px 0 0;box-sizing:border-box;"></div>
<div style="position:absolute;left:1750px;top:194px;width:114px;height:53px;border:2px solid #0c1d2e;border-bottom:none;border-radius:6px 6px 0 0;box-sizing:border-box;"></div>
<div style="position:absolute;left:1863px;top:194px;width:171px;height:53px;border:2px solid #0c1d2e;border-bottom:none;border-radius:6px 6px 0 0;box-sizing:border-box;"></div>
<div style="position:absolute;left:2033px;top:194px;width:117px;height:53px;border:2px solid #0c1d2e;border-bottom:none;border-radius:6px 6px 0 0;box-sizing:border-box;"></div>
<div style="position:absolute;left:1581px;top:262px;width:87px;height:48px;border:2px solid #0c1d2e;border-bottom:none;border-radius:6px 6px 0 0;box-sizing:border-box;"></div>
<div style="position:absolute;left:1667px;top:262px;width:92px;height:48px;border:2px solid #0c1d2e;border-bottom:none;border-radius:6px 6px 0 0;box-sizing:border-box;"></div>
<div style="position:absolute;left:1758px;top:262px;width:139px;height:48px;border:2px solid #0c1d2e;border-bottom:none;border-radius:6px 6px 0 0;box-sizing:border-box;"></div>
<div style="position:absolute;left:1896px;top:262px;width:88px;height:48px;border:2px solid #0c1d2e;border-bottom:none;border-radius:6px 6px 0 0;box-sizing:border-box;"></div>
<div style="position:absolute;left:1983px;top:262px;width:111px;height:48px;border:2px solid #0c1d2e;border-bottom:none;border-radius:6px 6px 0 0;box-sizing:border-box;"></div>
<div style="position:absolute;left:2092px;top:262px;width:171px;height:48px;background:#37464e;border:2px solid #0c1d2e;border-bottom:none;border-radius:6px 6px 0 0;box-sizing:border-box;"></div>
<div style="position:absolute;left:2263px;top:308px;width:301px;height:2px;background:#0c1d2e;"></div>
<svg style="position:absolute;left:1607px;top:320px;" width="16" height="26" viewBox="0 0 16 26"><path d="M0.5 0.5L15.5 13 0.5 25.5z" fill="#2b7a55"/></svg>
<svg style="position:absolute;left:1737px;top:331px;" width="10.5" height="5.5" viewBox="0 0 10.5 5.5"><path d="M0 0H10.5L5.25 5.5Z" fill="#6e7b83"/></svg>
<div style="position:absolute;left:1755px;top:314px;width:2px;height:36px;background:linear-gradient(to bottom,rgba(0,0,0,0),#000 22%,#000 78%,rgba(0,0,0,0));"></div>
<div style="position:absolute;left:1757px;top:316px;width:1px;height:32px;background:linear-gradient(to bottom,rgba(255,255,255,0),rgba(255,255,255,0.09) 30%,rgba(255,255,255,0.09) 70%,rgba(255,255,255,0));"></div>
<svg style="position:absolute;left:1774px;top:317px;" width="30" height="29" viewBox="0 0 30 29"><rect x="6" y="1" width="18" height="10" fill="#64717a"/><path d="M1 10h28v12c0 1-1 2-2 2H3c-1 0-2-1-2-2z" fill="#64717a"/><rect x="4" y="24" width="22" height="4.5" fill="#5a676f"/></svg>
<div style="position:absolute;left:1882px;top:314px;width:2px;height:36px;background:linear-gradient(to bottom,rgba(0,0,0,0),#000 22%,#000 78%,rgba(0,0,0,0));"></div>
<div style="position:absolute;left:1884px;top:316px;width:1px;height:32px;background:linear-gradient(to bottom,rgba(255,255,255,0),rgba(255,255,255,0.09) 30%,rgba(255,255,255,0.09) 70%,rgba(255,255,255,0));"></div>
<svg style="position:absolute;left:1903px;top:318px;" width="32" height="27" viewBox="0 0 32 27"><rect x="0" y="5" width="23" height="22" fill="#5f6c74"/><path d="M9 22l3-7 14-14 4 4-14 14z" fill="#7e8a6c"/><path d="M26 1l4 4 2-2-4-4z" fill="#a04a4a"/></svg>
<div style="position:absolute;left:2001px;top:314px;width:2px;height:36px;background:linear-gradient(to bottom,rgba(0,0,0,0),#000 22%,#000 78%,rgba(0,0,0,0));"></div>
<div style="position:absolute;left:2003px;top:316px;width:1px;height:32px;background:linear-gradient(to bottom,rgba(255,255,255,0),rgba(255,255,255,0.09) 30%,rgba(255,255,255,0.09) 70%,rgba(255,255,255,0));"></div>
<svg style="position:absolute;left:2018px;top:322px;" width="30" height="20" viewBox="0 0 30 20"><path d="M8 4a4 4 0 0 1 4-4h14a4 4 0 0 1 4 4v16H8z" fill="#5f6c74"/><path d="M1 19l8-8M4 11h5.5v5.5" stroke="#5f6c74" stroke-width="3" fill="none"/></svg>
<div style="position:absolute;left:2510.2px;top:314px;width:2.0px;height:36px;background:linear-gradient(to bottom,rgba(0,0,0,0),#000 22%,#000 78%,rgba(0,0,0,0));"></div>
<div style="position:absolute;left:2512.2px;top:316px;width:1.0px;height:32px;background:linear-gradient(to bottom,rgba(255,255,255,0),rgba(255,255,255,0.09) 30%,rgba(255,255,255,0.09) 70%,rgba(255,255,255,0));"></div>
<svg style="position:absolute;left:2525px;top:315.5px;" width="29" height="29" viewBox="0 0 29 29"><path d="M23.5 16A9.5 9.5 0 1 1 17 5.5" stroke="#5f6c74" stroke-width="5.5" fill="none"/><path d="M14 0l12 5.5L16 13z" fill="#5f6c74"/></svg>
<svg style="position:absolute;left:1171px;top:607.5px;" width="20" height="18.5" viewBox="0 0 20 18.5"><path d="M0 0.5h19.5L9.75 10z" fill="#8e969a"/><rect x="0.5" y="12.5" width="18.5" height="6" fill="#1d9e52"/></svg>
<svg style="position:absolute;left:1220px;top:608px;" width="10" height="18" viewBox="0 0 10 18"><path d="M0 0L9.5 9 0 18z" fill="#13b04f"/></svg>
<div style="position:absolute;left:1344px;top:335px;width:2px;height:701px;background:#5a6368;"></div>
<div style="position:absolute;left:1315.5px;top:743px;width:24.5px;height:256px;background:#2c373d;"></div>
<div style="position:absolute;left:170px;top:841px;width:2.5px;height:40.5px;background:#ffcc00;"></div>
<svg style="position:absolute;left:137.5px;top:1043px;" width="23" height="20.5" viewBox="0 0 23 20.5"><rect x="0" y="0" width="22.5" height="20.5" rx="2.5" fill="#3dba3f"/><text x="4.5" y="17" font-family="Liberation Sans" font-style="italic" font-size="18" fill="#ffffff">C</text></svg>
<svg style="position:absolute;left:265.5px;top:1045.5px;" width="11.5" height="17" viewBox="0 0 11.5 17"><path d="M0.5 6.5L5.75 0.5 11 6.5z" fill="#9b9590"/><path d="M0.5 10.5L5.75 16.5 11 10.5z" fill="#9b9590"/><path d="M0.5 7h10.5M0.5 10h10.5" stroke="#111" stroke-width="0.8"/></svg>
<svg style="position:absolute;left:1541.5px;top:1045.5px;" width="11.5" height="17" viewBox="0 0 11.5 17"><path d="M0.5 6.5L5.75 0.5 11 6.5z" fill="#9b9590"/><path d="M0.5 10.5L5.75 16.5 11 10.5z" fill="#9b9590"/><path d="M0.5 7h10.5M0.5 10h10.5" stroke="#111" stroke-width="0.8"/></svg>
<div style="position:absolute;left:1446px;top:1038px;width:2px;height:30px;background:#0c1d2e;"></div>
<svg style="position:absolute;left:145px;top:1141px;" width="36" height="29" viewBox="0 0 36 29"><defs><linearGradient id="rg" x1="0" y1="0" x2="0" y2="1"><stop offset="0" stop-color="#e2e4e8"/><stop offset="1" stop-color="#9fa3aa"/></linearGradient></defs><ellipse cx="17.5" cy="11.5" rx="16.8" ry="10.8" fill="url(#rg)"/><ellipse cx="19.5" cy="12.8" rx="11.5" ry="6.8" fill="#36454e"/><text x="14.5" y="27.5" font-family="Liberation Sans" font-weight="bold" font-size="26" fill="#2277e6">R</text></svg>
<svg style="position:absolute;left:327px;top:1142px;" width="25" height="20" viewBox="0 0 25 20"><path d="M1 19c1-9 6-13 13-13V1l10 9-10 9v-6c-6 0-10 2-13 6z" fill="#d3d6d8"/></svg>
<svg style="position:absolute;left:1516px;top:1137px;" width="39" height="31" viewBox="0 0 39 31"><path d="M37.5 1.5L24 15" stroke="#b9bec1" stroke-width="3.2" stroke-linecap="round"/><path d="M21 13l6 6-8 11c-3 0-10-2-18-3 4-2 9-7 14-14z" fill="#b9bec1"/><path d="M6 26l11-10M10 28l9-9M14 29l7-7" stroke="#36454e" stroke-width="0.8"/></svg>
<div style="position:absolute;left:1535.5px;top:1412px;width:24.5px;height:290px;background:#2c373d;"></div>
<div style="position:absolute;left:178px;top:1643.5px;width:4px;height:45.5px;background:#5b5731;"></div>
<svg style="position:absolute;left:370.5px;top:1102px;" width="13.5" height="13" viewBox="0 0 13.5 13"><path d="M1.5 1.5l10.5 10M12 1.5l-10.5 10" stroke="#6f7a80" stroke-width="2.8" stroke-linecap="round"/></svg>
<svg style="position:absolute;left:616.5px;top:1102px;" width="13.5" height="13" viewBox="0 0 13.5 13"><path d="M1.5 1.5l10.5 10M12 1.5l-10.5 10" stroke="#6f7a80" stroke-width="2.8" stroke-linecap="round"/></svg>
<div style="position:absolute;left:112px;top:76px;width:2470px;height:1646px;border:1.5px solid rgba(255,255,255,0.28);border-radius:22px;box-sizing:border-box;z-index:5;pointer-events:none;"></div>
</div></body></html>
